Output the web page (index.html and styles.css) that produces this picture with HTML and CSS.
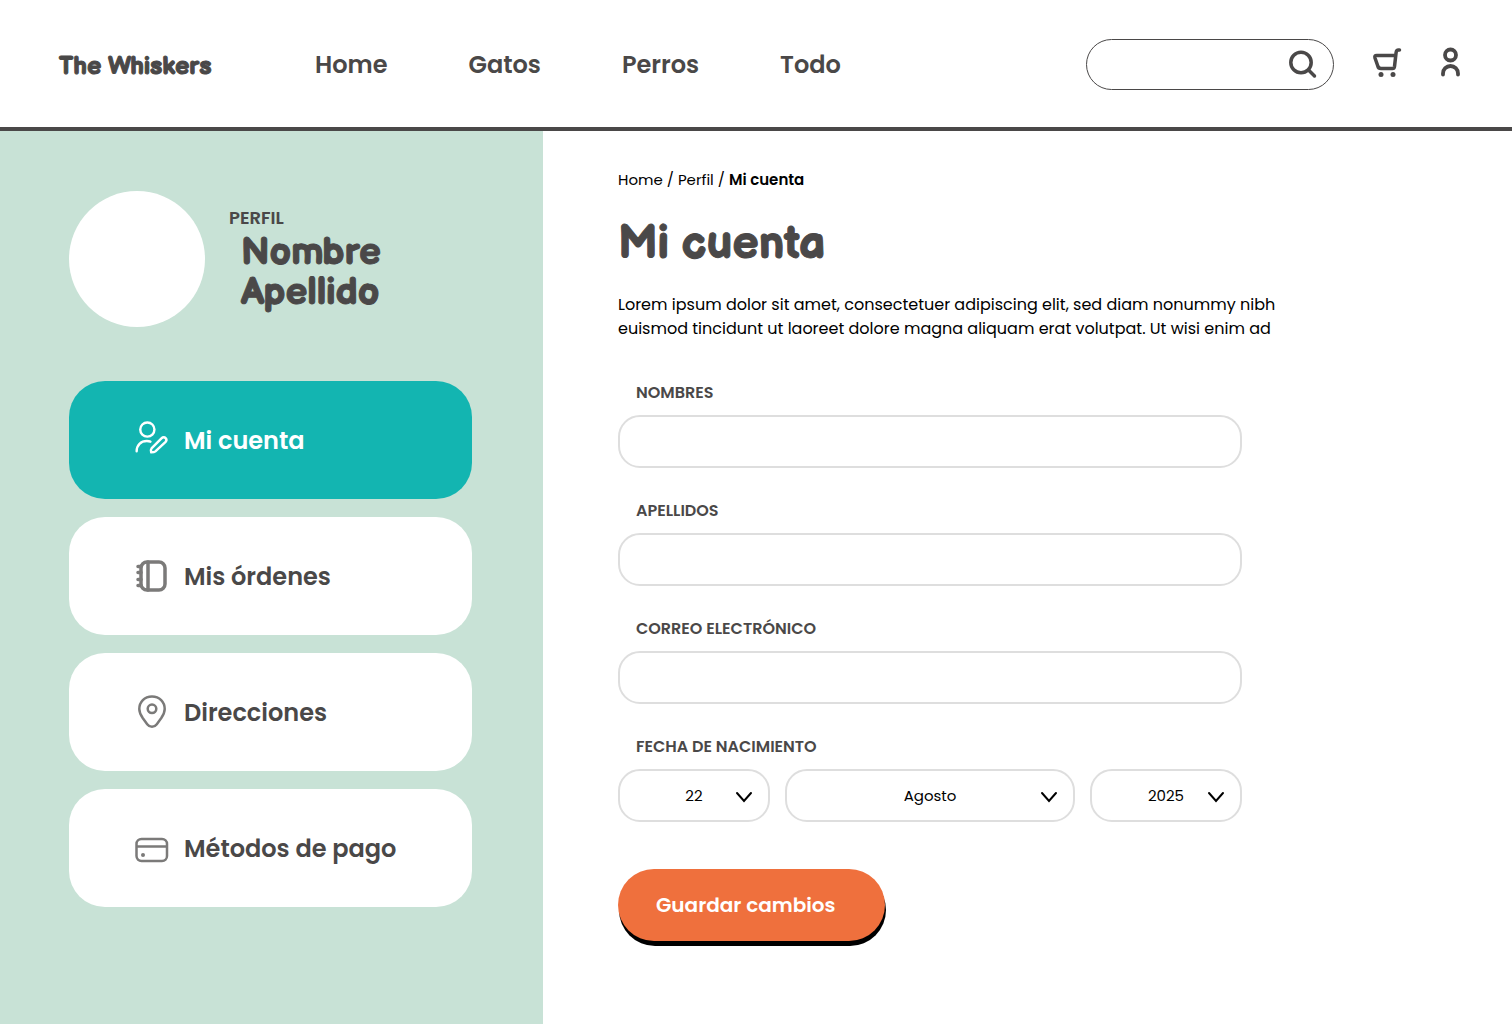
FILE: index.html
```html
<!DOCTYPE html>
<html lang="es">
<head>
    <meta charset="UTF-8">
    <meta name="viewport" content="width=device-width, initial-scale=1.0">
    <title>The Whiskers - Mi cuenta</title>
    <link rel="stylesheet" href="styles.css">
</head>
<body>
    <header class="header">
        <a class="logo" href="#">The Whiskers</a>
        <nav class="nav">
            <a href="#">Home</a>
            <a href="#">Gatos</a>
            <a href="#">Perros</a>
            <a href="#">Todo</a>
        </nav>
        <form class="search">
            <input type="search" name="q" aria-label="Buscar">
            <button type="submit" aria-label="Buscar">
                <svg width="28" height="28" viewBox="0 0 28 28" fill="none" stroke="currentColor" stroke-width="3.5" stroke-linecap="round">
                    <circle cx="12" cy="11.5" r="10.2"/>
                    <path d="M19.500 19L25.500 25"/>
                </svg>
            </button>
        </form>
        <div class="actions">
            <a href="#" aria-label="Carrito">
                <svg width="30" height="30" viewBox="0 0 30 30" fill="none" stroke="currentColor" stroke-width="3.5" stroke-linecap="round" stroke-linejoin="round">
                    <path d="M27.500 3h-1c-1.600 0-2.200 1-2.400 2.500L22.500 19.500c-.2 1.400-.8 2-2 2H9c-1.800 0-2.800-.8-3.200-2.500L3 11c-.5-1.800 0-2.500 1.700-2.500H23.500"/>
                    <circle cx="9" cy="27.500" r="2.500" fill="currentColor" stroke="none"/>
                    <circle cx="21" cy="27.500" r="2.500" fill="currentColor" stroke="none"/>
                </svg>
            </a>
            <a href="#" aria-label="Mi perfil">
                <svg width="21" height="30" viewBox="0 0 21 30" fill="none" stroke="currentColor" stroke-width="3.8" stroke-linecap="round">
                    <circle cx="10.500" cy="8" r="5.500"/>
                    <path d="M3 27.500v-1a7.500 7.500 0 0 1 15 0v1"/>
                </svg>
            </a>
        </div>
    </header>

    <div class="layout">
        <aside class="sidebar">
            <div class="profile">
                <div class="avatar"></div>
                <div>
                    <p class="profile-label">PERFIL</p>
                    <p class="profile-name">Nombre<br>Apellido</p>
                </div>
            </div>
            <nav class="menu">
                <a class="menu-item active" href="#">
                    <svg width="34" height="34" viewBox="0 2 35 35" fill="none" stroke="currentColor" stroke-width="2.5" stroke-linecap="round" stroke-linejoin="round">
                        <circle cx="12.700" cy="8.700" r="7.300"/>
                        <path d="M1.700 31c0-6.500 4.300-10.400 10.500-10.400 1.500 0 2.500.1 3.700.6"/>
                        <path d="M17 28.200L27.500 17.600c1.200-1.200 3-1.100 4 0s1.100 2.700 0 3.900L21 31.200c-.8.700-2.500 1-4.300 1-.4-1.500-.4-3.200.3-4z"/>
                    </svg>
                    Mi cuenta
                </a>
                <a class="menu-item" href="#">
                    <svg width="34" height="34" viewBox="0 0 34 34" fill="none" stroke="currentColor" stroke-width="3.5" stroke-linecap="round">
                        <rect x="6" y="3" width="24" height="28" rx="6"/>
                        <path d="M13 3v28M3 7.500H6M3 13.500H6M3 20.500H6M3 26.500H6"/>
                    </svg>
                    Mis órdenes
                </a>
                <a class="menu-item" href="#">
                    <svg width="34" height="34" viewBox="0 1 34 34" fill="none" stroke="currentColor" stroke-width="2.5" stroke-linejoin="round">
                        <path d="M17 2.500c-7.500 0-12.700 5.500-12.700 12.500 0 3.500 1.500 6.200 3.400 9l4.500 6.200c2.500 3.400 7.100 3.400 9.600 0l4.500-6.200c1.900-2.800 3.400-5.500 3.400-9C29.700 8 24.500 2.500 17 2.500z"/>
                        <circle cx="17" cy="14.800" r="4.300"/>
                    </svg>
                    Direcciones
                </a>
                <a class="menu-item" href="#">
                    <svg width="34" height="34" viewBox="0 0 34 34" fill="none" stroke="currentColor" stroke-width="2.5">
                        <rect x="1.500" y="8" width="30.500" height="22" rx="5"/>
                        <path d="M1.500 15.500h30.500"/>
                        <circle cx="8" cy="24" r="2" fill="currentColor" stroke="none"/>
                    </svg>
                    Métodos de pago
                </a>
            </nav>
        </aside>

        <main class="content">
            <nav class="breadcrumb" aria-label="Ruta">
                <a href="#">Home</a> / <a href="#">Perfil</a> / <strong>Mi cuenta</strong>
            </nav>
            <h1>Mi cuenta</h1>
            <p class="intro">Lorem ipsum dolor sit amet, consectetuer adipiscing elit, sed diam nonummy nibh euismod tincidunt ut laoreet dolore magna aliquam erat volutpat. Ut wisi enim ad</p>

            <form class="account-form">
                <div class="form-group">
                    <label for="nombres">NOMBRES</label>
                    <input type="text" id="nombres" name="nombres">
                </div>
                <div class="form-group">
                    <label for="apellidos">APELLIDOS</label>
                    <input type="text" id="apellidos" name="apellidos">
                </div>
                <div class="form-group">
                    <label for="correo">CORREO ELECTRÓNICO</label>
                    <input type="email" id="correo" name="correo">
                </div>
                <div class="form-group">
                    <label for="dia">FECHA DE NACIMIENTO</label>
                    <div class="date-row">
                        <div class="select">
                            <select id="dia" name="dia"><option>22</option></select>
                            <svg width="18" height="12" viewBox="0 0 18 12" fill="none" stroke="currentColor" stroke-width="2" stroke-linecap="round"><path d="M2 2l7 8 7-8"/></svg>
                        </div>
                        <div class="select">
                            <select name="mes" aria-label="Mes"><option>Agosto</option></select>
                            <svg width="18" height="12" viewBox="0 0 18 12" fill="none" stroke="currentColor" stroke-width="2" stroke-linecap="round"><path d="M2 2l7 8 7-8"/></svg>
                        </div>
                        <div class="select">
                            <select name="anio" aria-label="Año"><option>2025</option></select>
                            <svg width="18" height="12" viewBox="0 0 18 12" fill="none" stroke="currentColor" stroke-width="2" stroke-linecap="round"><path d="M2 2l7 8 7-8"/></svg>
                        </div>
                    </div>
                </div>
                <button class="save" type="submit">Guardar cambios</button>
            </form>
        </main>
    </div>
</body>
</html>
```

FILE: styles.css
```css
* {
    box-sizing: border-box;
}
body {
    margin: 0;
    min-height: 100vh;
    display: flex;
    flex-direction: column;
    font-family: Poppins, Inter, sans-serif;
    color: #4a4848;
    background-color: #fff;
}
a {
    color: inherit;
    text-decoration: none;
}
h1, p {
    margin: 0;
}
svg {
    display: block;
    flex-shrink: 0;
    overflow: visible;
}
.logo, .profile-name, h1 {
    font-family: "Balsamiq Sans", Lato, sans-serif;
    font-weight: 700;
    -webkit-text-stroke: 1px currentColor;
}

/* Header */
.header {
    display: flex;
    align-items: center;
    padding: 37px 51px 35px 59px;
    border-bottom: 4px solid #4a4848;
}
.logo {
    width: 256px;
    padding-top: 3px;
    font-size: 25px;
}
.nav {
    display: flex;
    gap: 81px;
    font-size: 24px;
    font-weight: 600;
}
.search {
    display: flex;
    align-items: center;
    width: 248px;
    height: 51px;
    margin: 2px 38px 2px auto;
    padding: 0 16px 0 20px;
    border: 1px solid #4a4848;
    border-radius: 26px;
}
.search input {
    flex: 1;
    min-width: 0;
    border: none;
    outline: none;
    font: inherit;
    font-size: 16px;
    background: none;
}
.search button {
    padding: 0;
    border: none;
    color: inherit;
    background: none;
    cursor: pointer;
}
.actions {
    display: flex;
    gap: 38px;
    margin-bottom: 6px;
}

/* Sidebar */
.layout {
    flex: 1;
    display: grid;
    grid-template-columns: 543px 1fr;
}
.sidebar {
    padding: 60px 71px 60px 69px;
    background-color: #c8e2d6;
}
.profile {
    display: flex;
    align-items: center;
    gap: 24px;
    margin-bottom: 54px;
}
.avatar {
    width: 136px;
    height: 136px;
    border-radius: 50%;
    background-color: #fff;
}
.profile-label {
    font-size: 18px;
    font-weight: 600;
    line-height: 24px;
}
.profile-name {
    padding: 3px 0 0 12px;
    font-size: 38px;
    line-height: 40px;
}
.menu {
    display: flex;
    flex-direction: column;
    gap: 18px;
}
.menu-item {
    display: flex;
    align-items: center;
    gap: 15px;
    height: 118px;
    padding: 0 66px;
    border-radius: 36px;
    font-size: 24px;
    font-weight: 600;
    background-color: #fff;
}
.menu-item svg {
    color: #7b7a79;
}
.menu-item.active,
.menu-item.active svg {
    color: #fff;
}
.menu-item.active {
    background-color: #13b5b1;
}

/* Content */
.content {
    padding: 37px 75px;
}
.breadcrumb {
    font-size: 15px;
    line-height: 24px;
    color: #000;
}
.breadcrumb strong {
    font-weight: 600;
}
h1 {
    margin: 23px 0 18px;
    font-size: 46px;
    line-height: 60px;
}
.intro {
    max-width: 670px;
    margin-bottom: 40px;
    font-size: 16px;
    line-height: 24px;
    color: #000;
}
.account-form {
    max-width: 624px;
}
.form-group {
    margin-bottom: 31px;
}
.form-group label {
    display: block;
    margin-bottom: 10px;
    padding-left: 18px;
    font-size: 16px;
    font-weight: 600;
    line-height: 24px;
}
.form-group input,
.form-group select {
    display: block;
    width: 100%;
    height: 53px;
    padding: 0 20px;
    border: 2px solid #dedede;
    border-radius: 22px;
    font: inherit;
    font-size: 15px;
    color: #000;
    background-color: #fff;
}
.date-row {
    display: grid;
    grid-template-columns: 152px 1fr 152px;
    gap: 15px;
}
.select {
    position: relative;
    color: #000;
}
.form-group select {
    appearance: none;
    text-align: center;
    text-align-last: center;
}
.select svg {
    position: absolute;
    top: 22px;
    right: 17px;
    pointer-events: none;
}
.save {
    width: 267px;
    height: 72px;
    margin-top: 16px;
    padding: 0 38px;
    border: none;
    border-radius: 36px;
    font: inherit;
    font-size: 20px;
    font-weight: 600;
    text-align: left;
    white-space: nowrap;
    color: #fff;
    background-color: #ef703d;
    box-shadow: 1px 5px 0 #000;
    cursor: pointer;
}
```
